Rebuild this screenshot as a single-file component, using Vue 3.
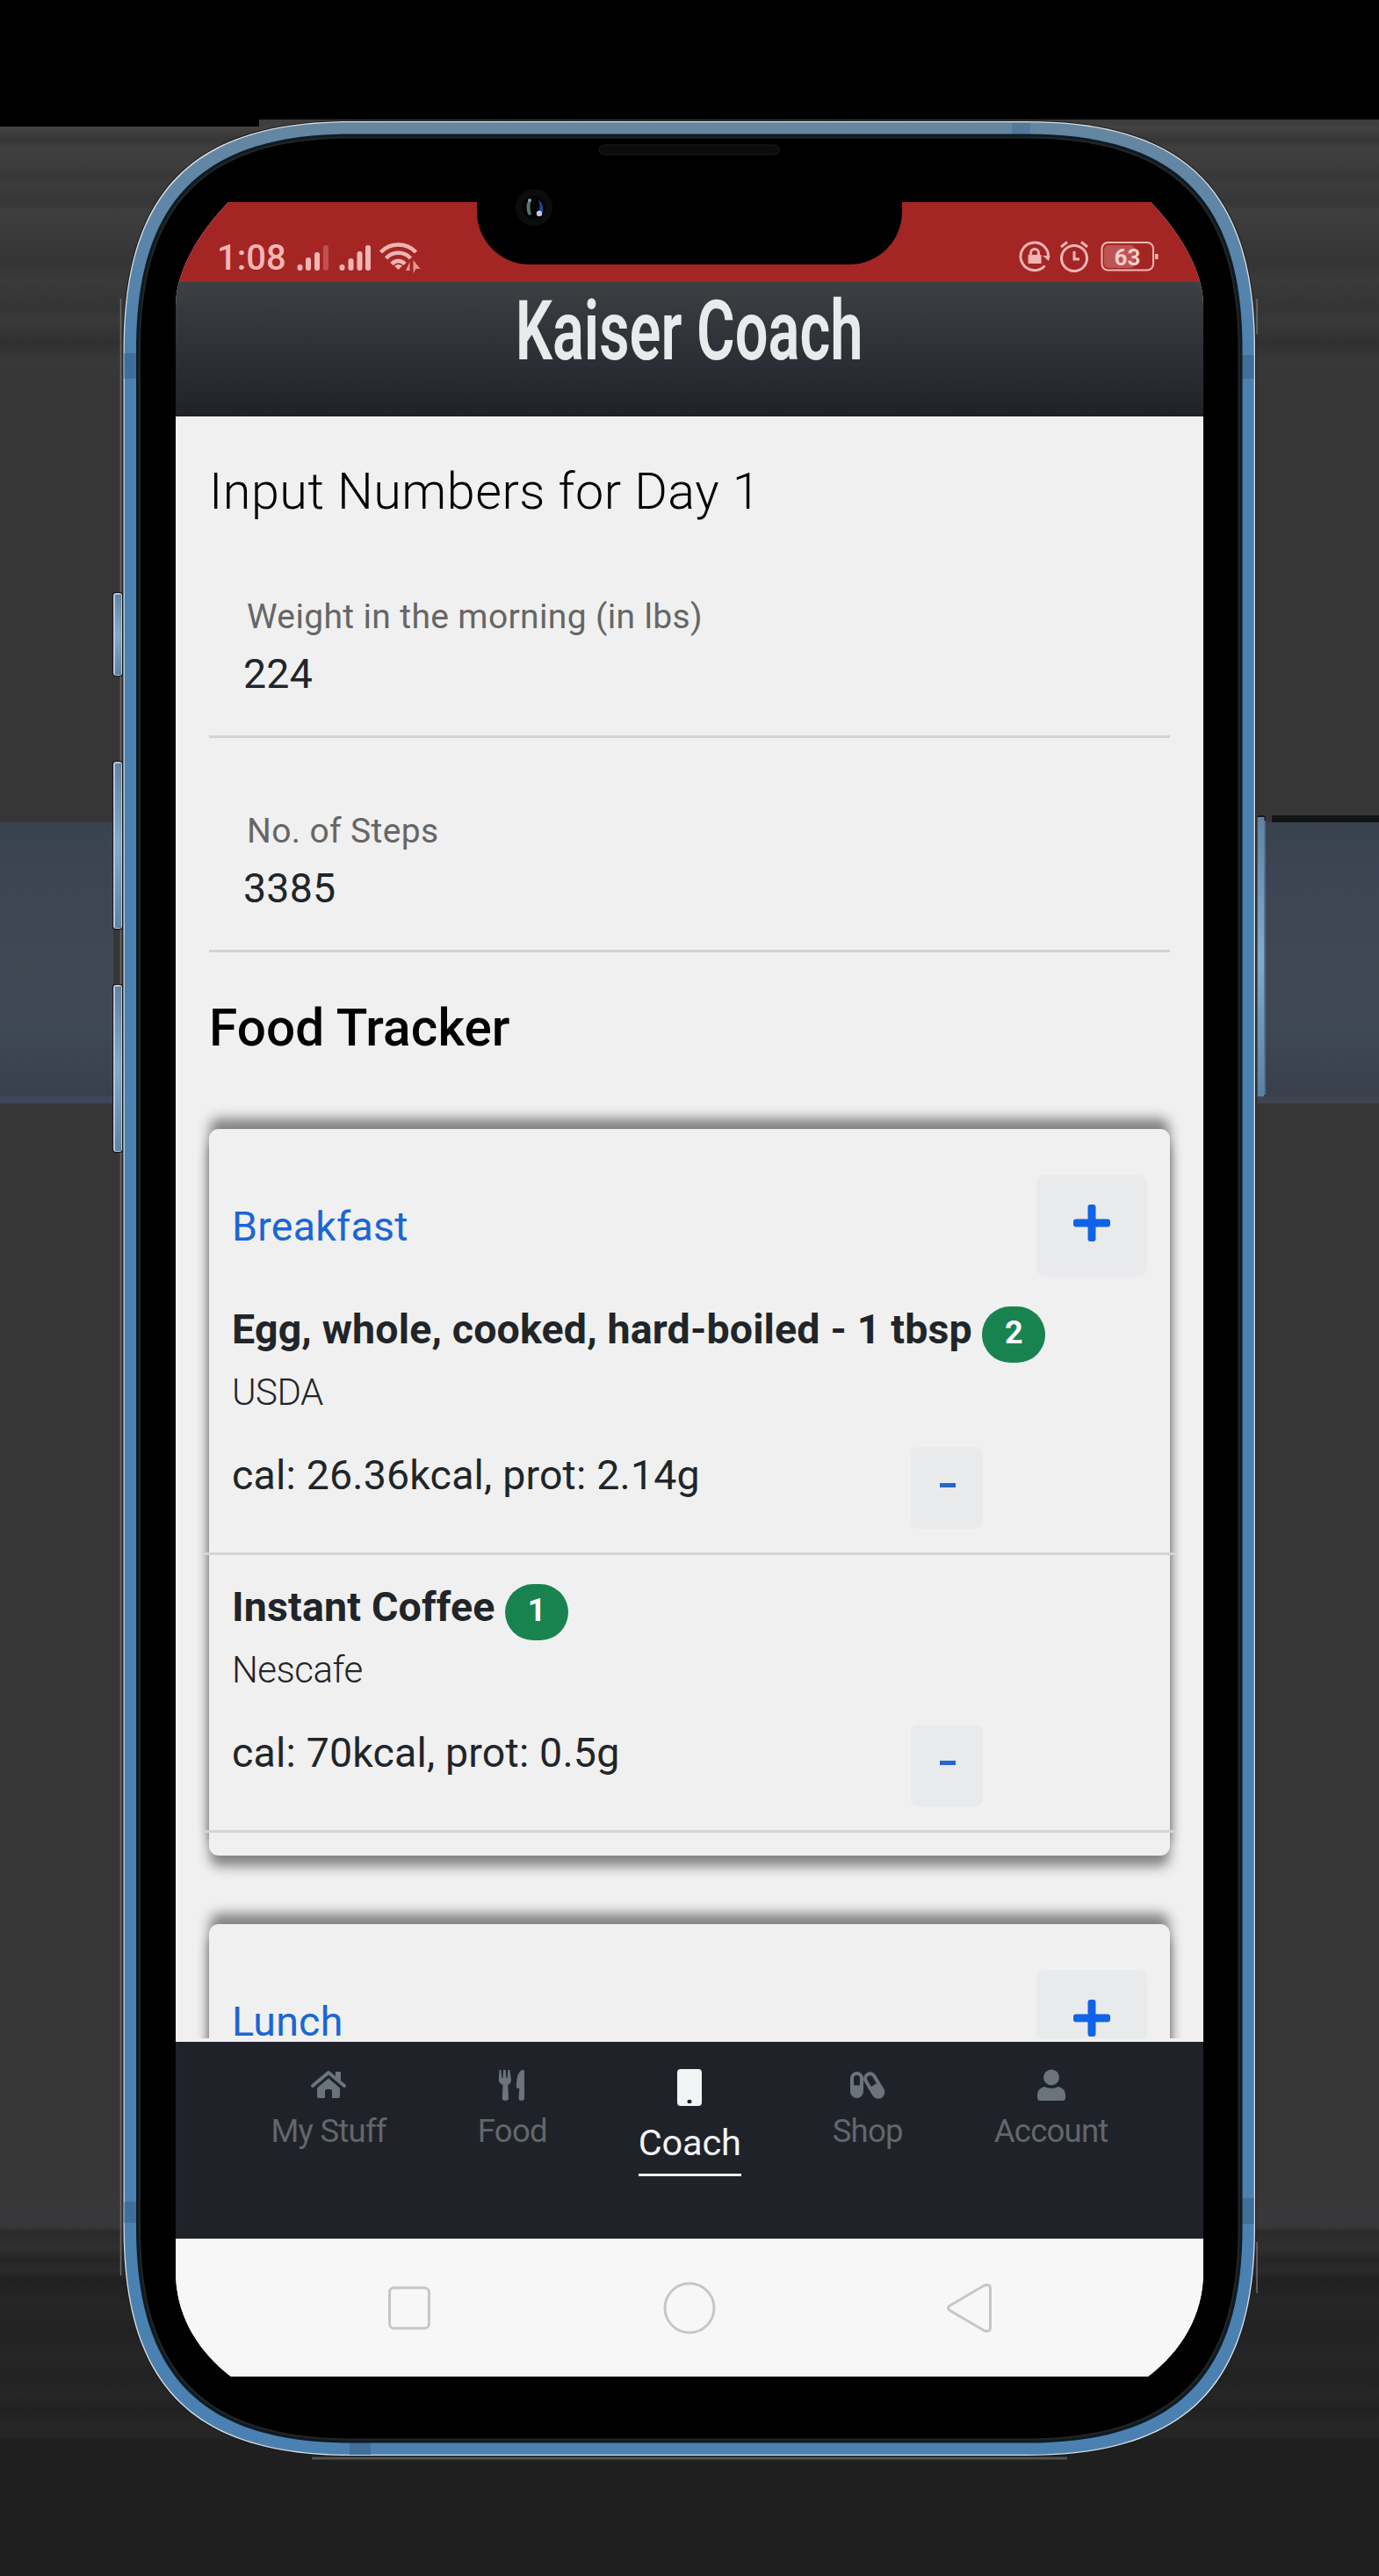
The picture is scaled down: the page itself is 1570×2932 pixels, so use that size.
<script setup>
const W = 1570
// Rounded device outline, inset from the outer edge by n pixels
function outline(n) {
  const l = 140.5 + n, r = W - 141 - n, t = 138 + n, b = 2795 - n
  const k = 79 - n * 0.25
  const f = 260 - n
  return `M${l} ${t + f}C${l} ${t + k} ${l + k} ${t} ${l + f} ${t}H${r - f}C${r - k} ${t} ${r} ${t + k} ${r} ${t + f}` +
    `V${b - f}C${r} ${b - k} ${r - k} ${b} ${r - f} ${b}H${l + f}C${l + k} ${b} ${l} ${b - k} ${l} ${b - f}Z`
}
const sideButtons = [
  { y: 675, h: 94 },
  { y: 867, h: 190 },
  { y: 1121, h: 190 },
]
const fields = [
  { label: 'Weight in the morning (in lbs)', value: '224' },
  { label: 'No. of Steps', value: '3385' },
]
const meals = [
  {
    name: 'Breakfast',
    items: [
      { title: 'Egg, whole, cooked, hard-boiled - 1 tbsp', brand: 'USDA', facts: 'cal: 26.36kcal, prot: 2.14g', count: 2 },
      { title: 'Instant Coffee', brand: 'Nescafe', facts: 'cal: 70kcal, prot: 0.5g', count: 1 },
    ],
  },
  { name: 'Lunch', items: [] },
]
const tabs = ['My Stuff', 'Food', 'Coach', 'Shop', 'Account']
</script>

<template>
  <div class="stage">
    <svg class="device" width="1570" height="2932" viewBox="0 0 1570 2932">
      <defs>
        <linearGradient id="rim" x1="0" y1="138" x2="0" y2="420" gradientUnits="userSpaceOnUse">
          <stop offset="0" stop-color="#66869f" />
          <stop offset=".35" stop-color="#5f86a8" />
          <stop offset="1" stop-color="#4b81b0" />
        </linearGradient>
        <linearGradient id="key" x1="0" y1="0" x2="0" y2="1">
          <stop offset="0" stop-color="#64839f" />
          <stop offset=".5" stop-color="#83abc8" />
          <stop offset="1" stop-color="#5f82a3" />
        </linearGradient>
        <linearGradient id="band" x1="0" y1="0" x2="0" y2="1">
          <stop offset="0" stop-color="#38434f" />
          <stop offset=".2" stop-color="#3e4453" />
          <stop offset=".5" stop-color="#404854" />
          <stop offset=".75" stop-color="#3f4855" />
          <stop offset="1" stop-color="#393f4d" />
        </linearGradient>
      </defs>
      <rect y="936" width="129" height="312" fill="url(#band)" />
      <rect y="1248" width="129" height="8" fill="#40475a" />
      <rect x="1441" y="936" width="129" height="312" fill="url(#band)" />
      <rect x="1432" y="1248" width="138" height="8" fill="#40444f" />
      <rect x="1448" y="928" width="122" height="8" fill="#121416" />
      <path d="M137.500 340V2590M1431 340V380M1431 2552V2610" stroke="#6d6b68" stroke-width="1.500" />
      <path d="M355 2798H1215" stroke="#555350" stroke-width="3" />
      <g v-for="b in sideButtons" :key="b.y">
        <rect x="128" :y="b.y - 1" width="12" :height="b.h + 2" rx="3" fill="#14171c" />
        <rect x="129" :y="b.y" width="10" :height="b.h" rx="3" fill="#b9c3e0" />
        <rect x="131" :y="b.y + 2" width="7" :height="b.h - 3" fill="url(#key)" />
      </g>
      <rect x="1431" y="928" width="10" height="320" rx="3" fill="#14171c" />
      <rect x="1431.500" y="930" width="8" height="318" fill="url(#key)" />
      <rect x="1439" y="934" width="2" height="312" fill="#4b7099" />
      <path :d="outline(-1)" fill="#1c1c1c" />
      <path :d="outline(0)" fill="#d9dde2" />
      <path :d="outline(1.3)" fill="url(#rim)" />
      <g fill="#3f6e98">
        <rect x="141.500" y="402" width="14" height="29" />
        <rect x="1414" y="404" width="13.500" height="27" />
        <rect x="141.500" y="2506" width="14" height="24" />
        <rect x="1414" y="2502" width="13.500" height="29" />
        <rect x="398" y="2779" width="24" height="15" />
        <rect x="1152" y="140" width="21" height="15" fill="#52789c" />
      </g>
      <path :d="outline(14.5)" fill="#0c1c26" />
      <path :d="outline(17.5)" fill="#272422" />
      <path :d="outline(19.5)" fill="#000" />
      <rect x="682" y="165" width="205" height="11" rx="5.500" fill="#0c0c0c" stroke="#1d1d1d" />
    </svg>

    <div class="screen">
      <header class="status">
        <div class="status-left">
          <span class="clock">1:08</span>
          <svg class="signals" width="138" height="38" viewBox="337 273 138 38">
            <g stroke="#f3b5b3" stroke-width="6" stroke-linecap="round">
              <path d="M341.500 304v1M351 296v9M361 290v15M389.500 304v1M399.500 297v8M409.500 289v16M419 282v23" />
              <path d="M371 282v23" stroke="#c0504f" />
            </g>
            <g fill="none" stroke="#f3b5b3" stroke-width="4.500">
              <path d="M433.500 287a28 28 0 0 1 40 0M439.500 294a19 19 0 0 1 28 0M446 300.500a10 10 0 0 1 15 0" />
            </g>
            <path d="M449 302.500q4.500-3 9 0l-4.500 4.500z" fill="#f3b5b3" />
            <path d="M470.500 296v15l3-5h5zM466.500 298v10h-4.500z" fill="#f3b5b3" opacity=".8" />
          </svg>
        </div>
        <svg class="status-right" width="162" height="38" viewBox="1159 273 162 38">
          <g fill="none" stroke="#f3b5b3" stroke-width="3">
            <path d="M1189.500 302.500a15.800 15.800 0 1 1 4-9" />
            <path d="M1173.500 291v-3a4.500 4.500 0 0 1 9 0v3" />
            <circle cx="1223" cy="294" r="14.500" />
            <path d="M1223 286v9h6M1208 281l7-5.500M1238 281l-7-5.500" />
            <rect x="1254.500" y="276" width="58.500" height="31.500" rx="7" stroke-width="2" />
          </g>
          <rect x="1257" y="279" width="35" height="26" rx="5" fill="#bd5452" />
          <path d="M1170.500 290h15v10h-15zM1187 291h8.500l-1.500 6zM1315 289h3.500v6h-3.500z" fill="#f3b5b3" />
          <text x="1283.500" y="301.500" text-anchor="middle" class="battery">63</text>
        </svg>
        <div class="notch"></div>
      </header>

      <div class="title"><h1>Kaiser Coach</h1></div>

      <main class="content">
        <h2 class="heading">Input Numbers for Day 1</h2>
        <div v-for="f in fields" :key="f.label" class="field">
          <div class="label">{{ f.label }}</div>
          <div class="value">{{ f.value }}</div>
        </div>
        <h3 class="subheading">Food Tracker</h3>

        <section v-for="m in meals" :key="m.name" class="card">
          <div class="card-head">
            <span class="meal">{{ m.name }}</span>
            <span class="add">
              <svg width="42" height="42" viewBox="0 0 42 42">
                <rect x="16.500" width="9" height="42" rx="3" />
                <rect y="16.500" width="42" height="9" rx="3" />
              </svg>
            </span>
          </div>
          <article v-for="i in m.items" :key="i.title" class="entry">
            <div class="entry-title"><b>{{ i.title }}</b><span class="badge">{{ i.count }}</span></div>
            <div class="brand">{{ i.brand }}</div>
            <div class="facts">
              <span>{{ i.facts }}</span>
              <span class="remove"><i></i></span>
            </div>
          </article>
        </section>
      </main>

      <nav class="tabs">
        <div v-for="t in tabs" :key="t" class="tab" :class="{ active: t === 'Coach' }">
          <svg v-if="t === 'My Stuff'" width="40" height="36" viewBox="0 0 40 36">
            <path d="M2 19L20 4l18 15" fill="none" stroke="currentColor" stroke-width="4" stroke-linecap="round" stroke-linejoin="round" />
            <path d="M28 3h6v12l-6-5zM20 10.500L33 21.500V31q0 2-2 2h-7v-8q0-2-2-2h-4q-2 0-2 2v8H9q-2 0-2-2V21.500z" />
          </svg>
          <svg v-else-if="t === 'Food'" width="40" height="36" viewBox="0 0 40 36">
            <path d="M5.500 1h2l.8 9h1.200l.6-9h2.600l.6 9h1.200l.8-9h2l1.700 11q0 4-3.700 6l.7 15q0 3-3.600 3t-3.600-3l.7-15q-4.700-2-4.700-6zM34 2.500V33q0 3-3.300 3T27.500 33l.8-11h-2.600q-1-1-.9-3Q25 4 31.500.8 34 .5 34 2.500z" />
          </svg>
          <svg v-else-if="t === 'Coach'" width="28" height="42" viewBox="0 0 28 42">
            <path fill-rule="evenodd" d="M4 0h20q4 0 4 4v34q0 4-4 4H4q-4 0-4-4V4q0-4 4-4zM14 34.800a2.600 2.200 0 1 0 0 4.400a2.600 2.200 0 1 0 0-4.400z" />
          </svg>
          <svg v-else-if="t === 'Shop'" width="40" height="36" viewBox="0 0 40 36">
            <path fill-rule="evenodd" d="M7.500 3a7.500 7.500 0 0 1 7.500 7.500v15a7.500 7.500 0 0 1-15 0v-15a7.500 7.500 0 0 1 7.500-7.500zM7.500 7a3.500 3.500 0 0 0-3.500 3.500v8h7v-8a3.500 3.500 0 0 0-3.500-3.500z" />
            <g transform="rotate(-31 27.500 19)">
              <path fill-rule="evenodd" d="M27.500 2a7.500 7.500 0 0 1 7.500 7.500v18a7.500 7.500 0 0 1-15 0v-18a7.500 7.500 0 0 1 7.500-7.500zM27.500 6a3.500 3.500 0 0 0-3.500 3.500v8.500h7v-8.500a3.500 3.500 0 0 0-3.500-3.500z" />
            </g>
          </svg>
          <svg v-else width="40" height="36" viewBox="0 0 40 36">
            <circle cx="20" cy="9.500" r="9" />
            <path d="M12 20q8 4 16 0 8 2.500 8 9.500v3q0 3.500-3.500 3.500h-25Q4 36 4 32.500v-3q0-7 8-9.500z" />
          </svg>
          <span>{{ t }}</span>
        </div>
      </nav>

      <footer class="system">
        <svg width="60" height="60" viewBox="0 0 60 60"><rect x="7.500" y="7" width="45" height="46" rx="5" /></svg>
        <svg width="60" height="60" viewBox="0 0 60 60"><circle cx="30" cy="30" r="28" /></svg>
        <svg width="60" height="60" viewBox="0 0 60 60"><path d="M7 27.500L46.500 4.300Q53.500 2 53.500 8V52q0 6-7 3.700L7 32.500Q4 30 7 27.500z" /></svg>
      </footer>
    </div>

    <svg class="camera" width="44" height="46" viewBox="0 0 44 46">
      <circle cx="22" cy="23" r="21" fill="#0b0d0d" />
      <circle cx="22" cy="23" r="13.500" fill="#030507" />
      <path d="M16 14q-5 9 0 18l3-1q-3-9 0-17z" fill="#557a68" />
      <path d="M27 14q8 8 4 17l-4-2q3-7 0-15z" fill="#1c4a94" />
      <circle cx="28" cy="30" r="3.200" fill="#c3c6ea" />
      <circle cx="17" cy="15" r="2" fill="#8aa197" />
    </svg>
  </div>
</template>

<style>
body { background: #363636; }
</style>

<style scoped>
.stage {
  position: relative;
  width: 1570px;
  height: 2932px;
  overflow: hidden;
  box-sizing: border-box;
  padding: 230px 200px 0;
  font-family: Roboto, "Liberation Sans", sans-serif;
  background:
    linear-gradient(#000, #000) 0 0 / 1570px 136px no-repeat,
    linear-gradient(#000, #000) 0 136px / 295px 8px no-repeat,
    linear-gradient(
      #3c3c3c 136px, #414141 146px, #363636 160px, #3f3f3f 168px, #3d3d3d 188px, #383838 200px,
      #3c3c3c 210px, #363636 230px, #3e3e3e 240px, #393939 270px, #353535 300px, #3a3a3a 320px,
      #343434 350px, #393939 365px, #303030 390px, #383838 410px, #363636 440px, #363636 2490px,
      #38383a 2512px, #36383a 2534px, #2a2a2a 2540px, #303030 2558px, #252525 2572px, #2a2a2a 2584px,
      #202020 2596px, #262626 2620px, #222 2652px, #262626 2680px, #222 2705px, #262626 2725px,
      #212121 2744px, #262626 2756px, #252525 2775px, #1f1f1f 2777px);
}
.device { position: absolute; left: 0; top: 0; }
.camera { position: absolute; left: 586px; top: 213px; }
.screen {
  position: relative;
  width: 1170px;
  height: 2475px;
  background: #f0f0f0;
  display: flex;
  flex-direction: column;
  clip-path: path("M60 0C25 36 0 80 0 118V2356C0 2405 25 2446 63 2475H1107C1145 2446 1170 2405 1170 2356V118C1170 80 1145 36 1110 0Z");
}
.status {
  position: relative;
  flex: none;
  height: 91px;
  box-sizing: border-box;
  padding: 43px 49px 0 47px;
  display: flex;
  justify-content: space-between;
  align-items: flex-start;
  background: #a32624;
  color: #f3b5b3;
}
.status-left { display: flex; gap: 12px; }
.clock { font-size: 40px; line-height: 42px; width: 78px; font-weight: 500; }
.battery { font-size: 26px; font-weight: 700; fill: #f8cfcd; }
svg { display: block; flex: none; overflow: visible; }
.notch {
  position: absolute;
  left: 342.5px;
  top: 0;
  width: 484px;
  height: 71px;
  border-radius: 0 0 60px 60px;
  background: #000;
}
.title {
  flex: none;
  height: 153px;
  background: linear-gradient(#3c4043, #2b2e34 60%, #1f2225);
  display: flex;
  justify-content: center;
}
h1, h2, h3 { margin: 0; white-space: nowrap; }
h1 {
  font-size: 95px;
  line-height: 111px;
  font-weight: 600;
  color: #e9eaec;
  transform: scaleX(0.703);
}
.content {
  flex: none;
  height: 1846px;
  box-sizing: border-box;
  overflow: hidden;
  padding: 51px 38px 0;
  color: #212529;
}
.heading { font-size: 57.500px; line-height: 70px; padding-bottom: 1px; font-weight: 300; color: #000; letter-spacing: 0.5px; }
.field {
  height: 244px;
  box-sizing: border-box;
  padding-top: 83px;
  border-bottom: 3px solid #d1d3d4;
}
.label { font-size: 39px; line-height: 46px; color: #666; padding-left: 43px; letter-spacing: 0.36px; }
.value { margin-top: 14px; font-size: 46.500px; line-height: 56px; padding-left: 39px; letter-spacing: 0.2px; }
.subheading { margin-top: 51px; font-size: 58.500px; line-height: 70px; font-weight: 500; color: #000; letter-spacing: 0.1px; }
.card {
  margin-top: 80px;
  padding: 52px 0 26px;
  border-radius: 11px;
  background: #f0f0f0;
  box-shadow: 0 -13px 14px -1px rgba(0, 0, 0, 0.46), 0 13px 14px -1px rgba(0, 0, 0, 0.46);
  min-height: 300px;
  box-sizing: border-box;
}
.card + .card { margin-top: 78px; }
.card-head {
  height: 116px;
  padding: 0 26px 0 26px;
  display: flex;
  justify-content: space-between;
  align-items: center;
  font-size: 46.500px;
  line-height: 46px;
  letter-spacing: 0.25px;
  color: #1a66d6;
}
.meal { padding-top: 2px; }
.add {
  width: 126px;
  height: 116px;
  box-sizing: border-box;
  padding-top: 34px;
  display: flex;
  justify-content: center;
  border-radius: 10px;
  background: #e9eaec;
}
.add svg { fill: #1063e8; }
.entry {
  height: 316px;
  box-sizing: border-box;
  margin: 0 -7px;
  padding: 32px 7px 0 33px;
  border-bottom: 3px solid #d3d5d6;
}
.entry:nth-child(2) { margin-top: 1px; }
.entry-title { display: flex; gap: 11.5px; height: 64px; font-size: 46.500px; line-height: 55px; white-space: nowrap; letter-spacing: 0.17px; }
.badge {
  width: 72px;
  height: 64px;
  margin-top: 1px;
  border-radius: 32px;
  background: #198350;
  color: #fff;
  font-size: 36px;
  line-height: 60px;
  font-weight: 700;
  text-align: center;
}
.brand { margin-top: 10px; font-size: 42px; line-height: 50px; font-weight: 300; letter-spacing: -0.5px; }
.facts {
  margin-top: 37px;
  display: grid;
  grid-template-columns: 773px 82px;
  font-size: 46.500px;
  line-height: 56px;
  letter-spacing: 0.18px;
}
.facts span:first-child { padding-top: 4px; }
.remove {
  height: 93px;
  border-radius: 8px;
  background: #e9eaec;
}
.remove i { display: block; width: 18px; height: 5px; margin: 41px 0 0 33px; background: #2267d2; }
.tabs {
  flex: none;
  margin-top: 4px;
  height: 224px;
  box-sizing: border-box;
  padding-top: 31px;
  display: flex;
  justify-content: center;
  gap: 104px;
  background: #1f2229;
  color: #6b747b;
  font-size: 36.500px;
  letter-spacing: -0.75px;
}
.tab { display: flex; flex-direction: column; align-items: center; }
.tab svg { fill: currentColor; }
.tab span { margin-top: 13px; line-height: 44px; color: #62676b; }
.tab.active { color: #f2f3f4; font-size: 41.500px; letter-spacing: -0.2px; }
.tab.active span { margin-top: 17px; line-height: 50px; padding-bottom: 10px; border-bottom: 3px solid #f2f3f4; color: #f2f3f4; }
.system {
  flex: none;
  height: 157px;
  display: flex;
  justify-content: center;
  gap: 259px;
  align-items: center;
  background: #f7f7f7;
}
.system svg { fill: none; stroke: #c6c6c6; stroke-width: 3; }
</style>
